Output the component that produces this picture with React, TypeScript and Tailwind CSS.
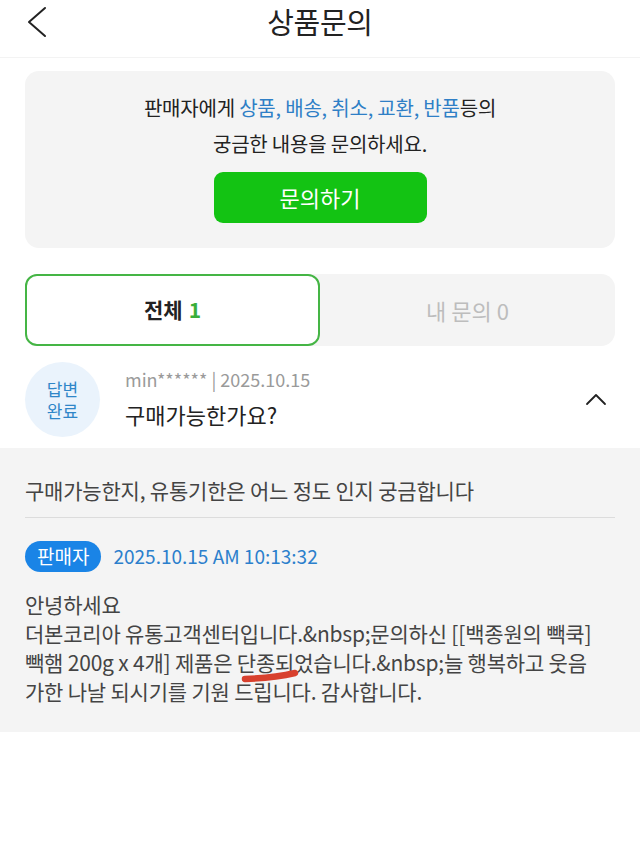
const font = { fontFamily: '"Noto Sans CJK KR", "Noto Sans", sans-serif' };

// Hand-drawn red marker under a word
function Marked({ children }: { children: React.ReactNode }) {
  return (
    <span className="relative inline-block">
      {children}
      <svg
        className="pointer-events-none absolute left-[3px] top-[21px]"
        width="60"
        height="14"
        viewBox="0 0 60 14"
      >
        <path
          d="M5 10 C 20 9.5, 38 8, 55 4"
          stroke="#d8402d"
          strokeWidth="6.5"
          strokeLinecap="round"
          fill="none"
        />
      </svg>
    </span>
  );
}

export default function App() {
  return (
    <div className="min-h-screen w-[640px] bg-white text-[#222]" style={font}>
      {/* Header */}
      <div className="h-[58px] border-b border-[#f3f3f3]">
        <div className="grid h-[42px] grid-cols-[1fr_auto_1fr] items-center">
          <div className="pl-[26px]">
            <svg width="22" height="32" viewBox="0 0 22 32" fill="none">
              <path d="M19 2 L3 16 L19 30" stroke="#222" strokeWidth="2" strokeLinecap="round" strokeLinejoin="round" />
            </svg>
          </div>
          <h1 className="text-[29px] font-normal tracking-[-0.3px] text-[#222]">상품문의</h1>
          <div />
        </div>
      </div>

      {/* Notice card */}
      <div className="mx-[25px] mt-[13px] flex flex-col items-center rounded-[14px] bg-[#f4f4f4] pt-[19px] pb-[25px]">
        <p className="text-[20px] leading-[36px] tracking-[-0.2px] text-[#222]">
          판매자에게 <span className="text-[#2f7fc6]">상품, 배송, 취소, 교환, 반품</span>등의
        </p>
        <p className="text-[20px] leading-[36px] tracking-[-0.2px] text-[#222]">궁금한 내용을 문의하세요.</p>
        <button className="mt-[10px] flex h-[51px] w-[213px] items-center justify-center rounded-[9px] bg-[#13c313] text-[22px] text-white">
          문의하기
        </button>
      </div>

      {/* Tabs */}
      <div className="mx-[25px] mt-[26px] grid h-[72px] grid-cols-2 rounded-[14px] bg-[#f4f4f4]">
        <div className="flex items-center justify-center rounded-[12px] border-2 border-[#45b545] bg-white text-[21px] font-bold text-[#222]">
          전체 <span className="ml-[6px] text-[#3aae3a]">1</span>
        </div>
        <div className="flex items-center justify-center text-[22px] text-[#bdbdbd]">내 문의 0</div>
      </div>

      {/* Inquiry row */}
      <div className="flex items-start px-[25px] pt-[16px] pb-[11px]">
        <div className="flex h-[75px] w-[75px] shrink-0 items-center justify-center rounded-full bg-[#eaf3fc]">
          <p className="text-center text-[17px] leading-[22px] text-[#2f86c8]">
            답변
            <br />
            완료
          </p>
        </div>
        <div className="ml-[25px] flex-1 pt-[5px]">
          <div className="text-[18px] leading-[24px] text-[#9a9a9a]">min****** | 2025.10.15</div>
          <div className="mt-[8px] text-[22px] leading-[30px] text-[#222]">구매가능한가요?</div>
        </div>
        <svg className="mt-[30px] mr-[8px]" width="22" height="14" viewBox="0 0 22 14" fill="none">
          <path d="M2 12 L11 3 L20 12" stroke="#222" strokeWidth="1.8" strokeLinecap="round" strokeLinejoin="round" />
        </svg>
      </div>

      {/* Detail */}
      <div className="bg-[#f4f4f4] px-[25px] pt-[28px] pb-[26px]">
        <p className="text-[21px] leading-[28px] tracking-[-0.2px] text-[#444]">
          구매가능한지, 유통기한은 어느 정도 인지 궁금합니다
        </p>
        <div className="mt-[13px] h-px bg-[#dcdcdc]" />
        <div className="mt-[23px] flex items-center">
          <span className="flex h-[31px] items-center rounded-full bg-[#1a84e6] px-[12px] text-[19px] text-white">
            판매자
          </span>
          <span className="ml-[12px] text-[19px] text-[#2b7fcc]">2025.10.15 AM 10:13:32</span>
        </div>
        <div className="mt-[18px] text-[21px] leading-[29px] tracking-[-0.2px] text-[#444]">
          <div>안녕하세요</div>
          <div className="whitespace-nowrap">더본코리아 유통고객센터입니다.&amp;nbsp;문의하신 [[백종원의 빽쿡]</div>
          <div className="whitespace-nowrap">
            빽햄 200g x 4개] 제품은 <Marked>단종되</Marked>었습니다.&amp;nbsp;늘 행복하고 웃음
          </div>
          <div>가한 나날 되시기를 기원 드립니다. 감사합니다.</div>
        </div>
      </div>
    </div>
  );
}
